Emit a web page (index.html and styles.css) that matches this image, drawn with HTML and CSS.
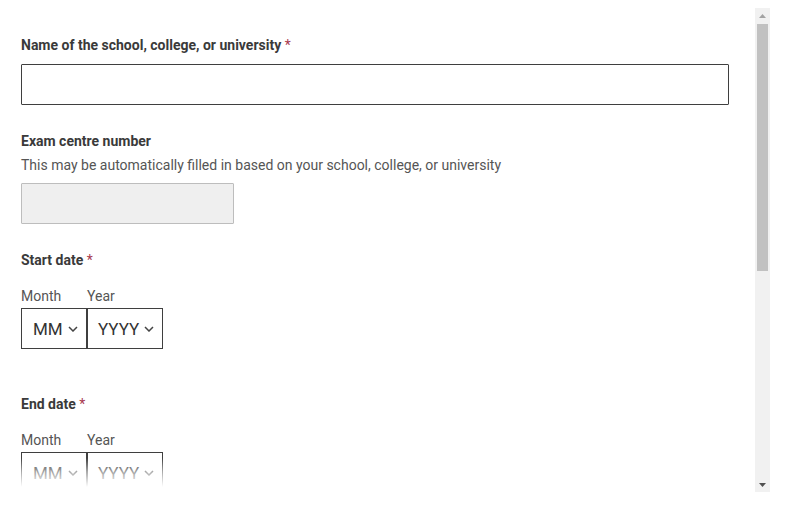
FILE: index.html
```html
<!DOCTYPE html>
<html lang="en">

<head>
  <meta charset="UTF-8">
  <meta name="viewport" content="width=device-width, initial-scale=1.0">
  <title>Education details</title>
  <link rel="stylesheet" href="styles.css">
</head>

<body>
  <div class="panel">
    <div class="panel-content">
      <form class="form">
        <div class="field">
          <label class="field-label">Name of the school, college, or university <span class="required">*</span></label>
          <input class="text-input" type="text">
        </div>

        <div class="field">
          <label class="field-label">Exam centre number</label>
          <div class="field-hint">This may be automatically filled in based on your school, college, or university</div>
          <input class="text-input text-input-small" type="text" disabled>
        </div>

        <div class="field field-date">
          <div class="field-label">Start date <span class="required">*</span></div>
          <div class="date-group">
            <div class="date-part">
              <span class="date-caption">Month</span>
              <div class="select-box select-month">MM
                <svg width="10" height="6" viewBox="0 0 10 6"><path d="M1 1l4 4l4-4" fill="none" stroke="#444" stroke-width="1.5"/></svg>
              </div>
            </div>
            <div class="date-part">
              <span class="date-caption">Year</span>
              <div class="select-box select-year">YYYY
                <svg width="10" height="6" viewBox="0 0 10 6"><path d="M1 1l4 4l4-4" fill="none" stroke="#444" stroke-width="1.5"/></svg>
              </div>
            </div>
          </div>
        </div>

        <div class="field field-date">
          <div class="field-label">End date <span class="required">*</span></div>
          <div class="date-group">
            <div class="date-part">
              <span class="date-caption">Month</span>
              <div class="select-box select-month">MM
                <svg width="10" height="6" viewBox="0 0 10 6"><path d="M1 1l4 4l4-4" fill="none" stroke="#444" stroke-width="1.5"/></svg>
              </div>
            </div>
            <div class="date-part">
              <span class="date-caption">Year</span>
              <div class="select-box select-year">YYYY
                <svg width="10" height="6" viewBox="0 0 10 6"><path d="M1 1l4 4l4-4" fill="none" stroke="#444" stroke-width="1.5"/></svg>
              </div>
            </div>
          </div>
        </div>
      </form>
      <div class="fade"></div>
    </div>

    <!-- scrollbar drawn by hand so it always shows -->
    <div class="scrollbar">
      <div class="scroll-btn">
        <svg width="7" height="4" viewBox="0 0 7 4"><path d="M0 4L3.5 0L7 4z" fill="#a3a3a3"/></svg>
      </div>
      <div class="scroll-track">
        <div class="scroll-thumb"></div>
      </div>
      <div class="scroll-btn">
        <svg width="7" height="4" viewBox="0 0 7 4"><path d="M0 0L3.5 4L7 0z" fill="#505050"/></svg>
      </div>
    </div>
  </div>
</body>

</html>
```

FILE: styles.css
```css
body {
  margin: 0px;
  background-color: #fff;
  font-family: Roboto, "Liberation Sans", sans-serif;
  color: #333;
}

.panel {
  display: flex;
  margin-top: 8px;
  height: 484px;
  width: 770px;
}

.panel-content {
  position: relative;
  flex: 1;
  overflow: hidden;
}

.form {
  padding: 27px 0px 0px 21px;
}

.field {
  display: flex;
  flex-direction: column;
  align-items: flex-start;
  margin-bottom: 26px;
}

.field-label {
  font-size: 14px;
  line-height: 20px;
  font-weight: bold;
  color: #3a3a3a;
  margin-bottom: 9px;
}

.required {
  color: #a8394f;
  font-weight: normal;
}

.field-hint {
  font-size: 14px;
  line-height: 20px;
  color: #555;
  margin-top: -5px;
  margin-bottom: 8px;
}

.text-input {
  box-sizing: border-box;
  width: 708px;
  height: 41px;
  margin: 0px;
  border: 1px solid #3f3f3f;
  border-radius: 1px;
  background-color: #fff;
  font-family: inherit;
  font-size: 16px;
}

.text-input-small {
  width: 213px;
  background-color: #efefef;
  border-color: #bdbdbd;
}

.field-date {
  margin-bottom: 45px;
}

.field-date .field-label {
  margin-bottom: 16px;
}

.date-group {
  display: flex;
}

.date-part {
  display: flex;
  flex-direction: column;
}

.date-caption {
  font-size: 14px;
  line-height: 20px;
  color: #555;
  margin-bottom: 2px;
}

.select-box {
  box-sizing: border-box;
  height: 41px;
  display: flex;
  align-items: center;
  gap: 5px;
  padding-left: 11px;
  border: 1px solid #3f3f3f;
  font-size: 17px;
  color: #333;
}

.select-month {
  width: 66px;
}

.select-year {
  width: 76px;
  padding-left: 10px;
}

.fade {
  position: absolute;
  left: 0px;
  right: 0px;
  bottom: 0px;
  height: 34px;
  background: linear-gradient(rgba(255, 255, 255, 0), rgba(255, 255, 255, 0.55) 40%, #fff 85%);
}

.scrollbar {
  width: 15px;
  display: flex;
  flex-direction: column;
  background-color: #f1f1f1;
}

.scroll-btn {
  height: 15px;
  display: flex;
  align-items: center;
  justify-content: center;
}

.scroll-track {
  flex: 1;
  padding: 1px 2px;
}

.scroll-thumb {
  height: 247px;
  background-color: #c1c1c1;
}
```
